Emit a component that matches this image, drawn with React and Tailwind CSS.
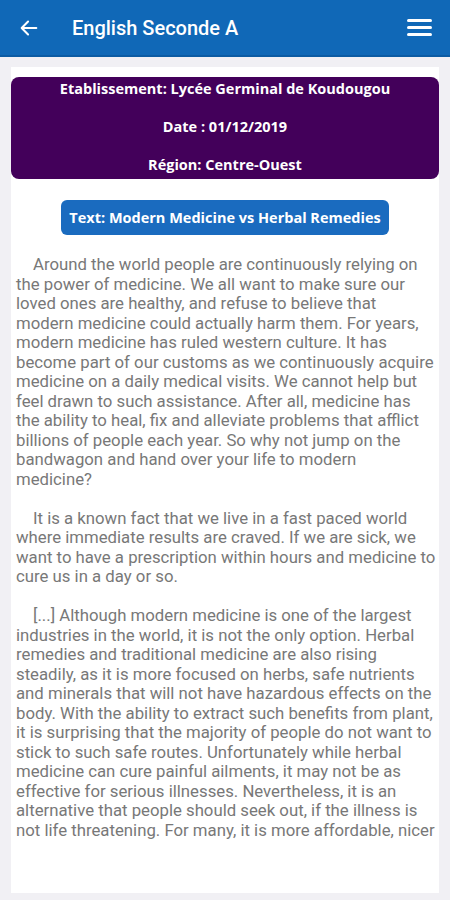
import React from "react";

const paragraphs = [
  "Around the world people are continuously relying on the power of medicine. We all want to make sure our loved ones are healthy, and refuse to believe that modern medicine could actually harm them. For years, modern medicine has ruled western culture. It has become part of our customs as we continuously acquire medicine on a daily medical visits. We cannot help but feel drawn to such assistance. After all, medicine has the ability to heal, fix and alleviate problems that afflict billions of people each year. So why not jump on the bandwagon and hand over your life to modern medicine?",
  "It is a known fact that we live in a fast paced world where immediate results are craved. If we are sick, we want to have a prescription within hours and medicine to cure us in a day or so.",
  "[...] Although modern medicine is one of the largest industries in the world, it is not the only option. Herbal remedies and traditional medicine are also rising steadily, as it is more focused on herbs, safe nutrients and minerals that will not have hazardous effects on the body. With the ability to extract such benefits from plant, it is surprising that the majority of people do not want to stick to such safe routes. Unfortunately while herbal medicine can cure painful ailments, it may not be as effective for serious illnesses. Nevertheless, it is an alternative that people should seek out, if the illness is not life threatening. For many, it is more affordable, nicer",
];

const App = () => {
  return (
    <div className="h-[900px] w-[450px] bg-[#f1f0f4] flex flex-col overflow-hidden">
      <header className="h-[57px] shrink-0 bg-[#1068b7] border-b-2 border-[#0c5ba3] flex items-center px-[18px] text-white">
        <svg width="22" height="22" viewBox="0 0 24 24" className="mr-[32px]">
          <path
            d="M20 12H5M11 5l-7 7 7 7"
            fill="none"
            stroke="white"
            strokeWidth="2.2"
            strokeLinecap="round"
            strokeLinejoin="round"
          />
        </svg>
        <h1 className="flex-1 font-['Roboto',sans-serif] font-medium text-[20px]">
          English Seconde A
        </h1>
        <div className="flex flex-col gap-[4px] w-[25px]">
          <span className="h-[3px] bg-white rounded-sm" />
          <span className="h-[3px] bg-white rounded-sm" />
          <span className="h-[3px] bg-white rounded-sm" />
        </div>
      </header>

      <main className="flex-1 px-[11px] pt-[10px] pb-[7px] min-h-0">
        <div className="bg-white h-full flex flex-col pt-[10px]">
          <div className="bg-[#43005a] rounded-[8px] pt-[2px] pb-[4px] flex flex-col gap-[18px] items-center text-white font-['Open_Sans',sans-serif] font-bold text-[14.5px] leading-[20px]">
            <p>Etablissement: Lycée Germinal de Koudougou</p>
            <p>Date : 01/12/2019</p>
            <p>Région: Centre-Ouest</p>
          </div>

          <div className="flex justify-center mt-[21px]">
            <div className="bg-[#1a6bbf] rounded-[6px] h-[35px] px-[8px] flex items-center text-white font-['Open_Sans',sans-serif] font-bold text-[14.5px]">
              Text: Modern Medicine vs Herbal Remedies
            </div>
          </div>

          <div className="mt-[20px] pl-[5px] pr-[3px] flex-1 min-h-0 overflow-hidden font-['Roboto',sans-serif] text-[16.75px] leading-[19.5px] text-[#787878]">
            {paragraphs.map((p, i) => (
              <p key={i} className="indent-[17px] mb-[19.5px]">
                {p}
              </p>
            ))}
          </div>
        </div>
      </main>
    </div>
  );
};

export default App;
